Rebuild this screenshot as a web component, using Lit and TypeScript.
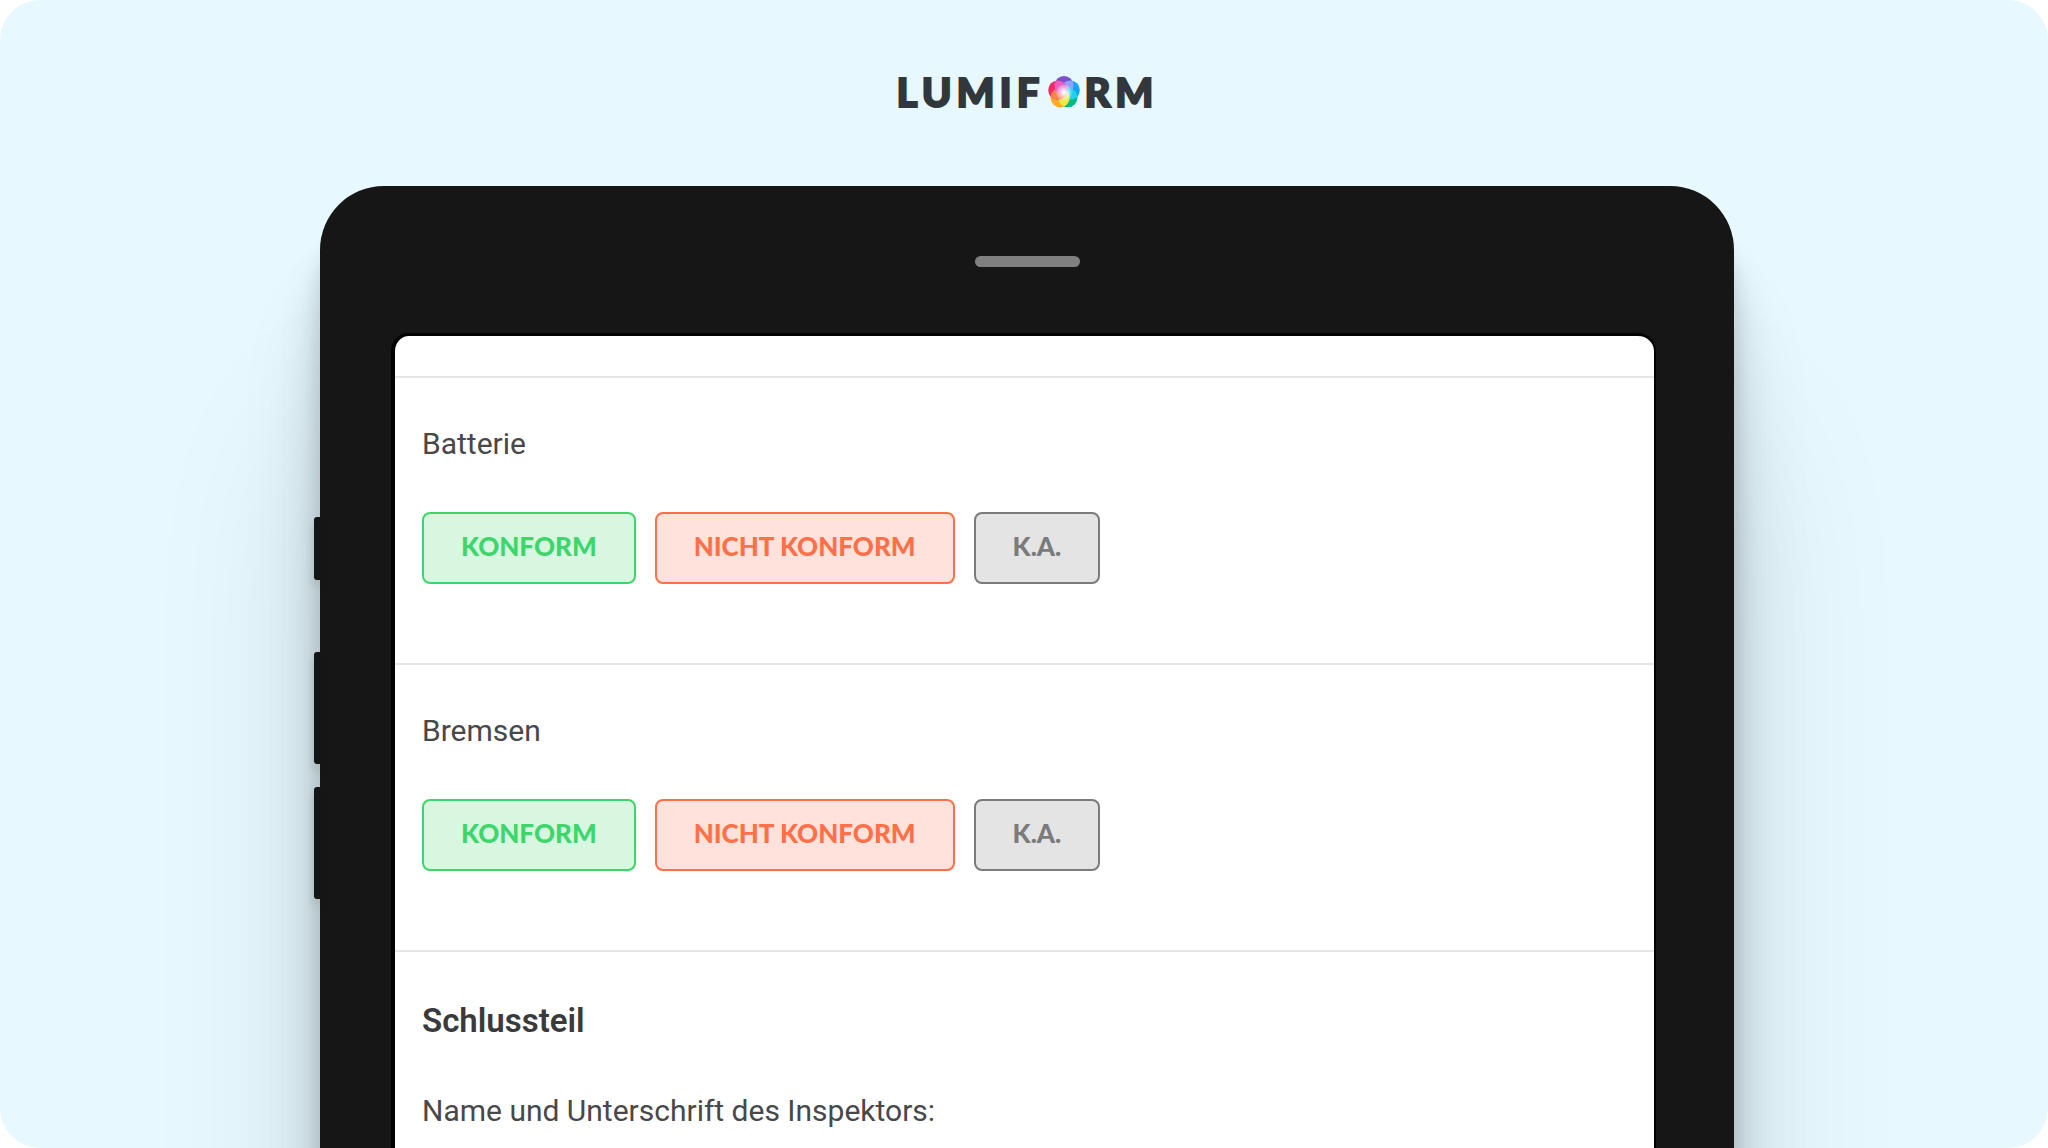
import { LitElement, html, css, svg } from "lit";
import { customElement, property } from "lit/decorators.js";

interface Answer {
  label: string;
  tone: "ok" | "fail" | "na";
}

const ANSWERS: Answer[] = [
  { label: "KONFORM", tone: "ok" },
  { label: "NICHT KONFORM", tone: "fail" },
  { label: "K.A.", tone: "na" },
];

const QUESTIONS = ["Batterie", "Bremsen"];

/* Petals of the orb, clockwise from the top; "mix" is the overlap with the next one */
const PETALS = [
  { id: "top", x: 16, y: 9.6, fill: "#7d4fc8", mix: "#8fa2ff" },
  { id: "right", x: 22.2, y: 14.1, fill: "#12a4ff", mix: "#1fd3f0" },
  { id: "bottom", x: 19.9, y: 21.6, fill: "#00b985", mix: "#e9ea4a" },
  { id: "gold", x: 12.1, y: 21.6, fill: "#ffab2a", mix: "#ff8350" },
  { id: "left", x: 9.8, y: 14.1, fill: "#f52a62", mix: "#e85fc4" },
];

@customElement("lumi-logo")
export class LumiLogo extends LitElement {
  static styles = css`
    :host {
      display: block;
    }
    .logo {
      display: flex;
      align-items: center;
      justify-content: center;
      gap: 4px;
      margin: 0;
      padding-left: 7px;
      color: #32373b;
      font: 900 40px/48px Lato, "Liberation Sans", sans-serif;
      letter-spacing: 5px;
      -webkit-text-stroke: 2px #32373b;
    }
    .orb {
      width: 32px;
      height: 32px;
    }
  `;

  render() {
    return html`
      <h1 class="logo">
        <span>LUMIF</span>
        <svg class="orb" viewBox="0 0 32 32" role="img" aria-label="O">
          <defs>
            ${PETALS.map(
              (p) => svg`<clipPath id=${p.id}><circle cx=${p.x} cy=${p.y} r="9.6"></circle></clipPath>`
            )}
            <radialGradient id="core">
              <stop offset="0.1" stop-color="#fff"></stop>
              <stop offset="0.5" stop-color="#fff" stop-opacity="0.6"></stop>
              <stop offset="1" stop-color="#fff" stop-opacity="0.15"></stop>
            </radialGradient>
          </defs>
          ${PETALS.map(
            (p) => svg`<circle cx=${p.x} cy=${p.y} r="9.6" fill=${p.fill}></circle>`
          )}
          ${PETALS.map((p, i) => {
            const next = PETALS[(i + 1) % PETALS.length];
            return svg`<circle cx=${next.x} cy=${next.y} r="9.6" fill=${p.mix} clip-path="url(#${p.id})"></circle>`;
          })}
          <circle cx="16" cy="16.4" r="8" fill="url(#core)"></circle>
        </svg>
        <span>RM</span>
      </h1>
    `;
  }
}

@customElement("check-item")
export class CheckItem extends LitElement {
  @property() question = "";

  static styles = css`
    :host {
      display: block;
      border-bottom: 2px solid #e6e6e6;
    }
    .item {
      display: flex;
      flex-direction: column;
      gap: 49px;
      margin: 0;
      padding: 47px 27px 79px;
    }
    .question {
      margin: 0;
      color: #48484a;
      font: 400 30px/38px Roboto, "Liberation Sans", sans-serif;
    }
    .answers {
      display: flex;
      flex-wrap: wrap;
      gap: 19px;
    }
    .answer {
      box-sizing: border-box;
      height: 72px;
      padding: 0 37px 4px;
      border: 2px solid;
      border-radius: 8px;
      font: 900 26px/32px Lato, "Liberation Sans", sans-serif;
      cursor: pointer;
    }
    .ok {
      color: #3dd66b;
      background: #d8f7e1;
    }
    .fail {
      color: #ff7048;
      background: #ffe2db;
    }
    .na {
      color: #7b7b7b;
      background: #e4e4e4;
    }
  `;

  render() {
    return html`
      <section class="item">
        <h2 class="question" id="question">${this.question}</h2>
        <div class="answers" role="group" aria-labelledby="question">
          ${ANSWERS.map(
            (a) => html`<button type="button" class="answer ${a.tone}">${a.label}</button>`
          )}
        </div>
      </section>
    `;
  }
}

@customElement("app-root")
export class AppRoot extends LitElement {
  static styles = css`
    :host {
      display: block;
      background: #fff;
    }
    .stage {
      box-sizing: border-box;
      display: flex;
      flex-direction: column;
      height: 100vh;
      overflow: hidden;
      border-radius: 40px;
      background: #e7f9ff;
    }
    .brand {
      padding: 68px 0 70px;
    }
    .tablet {
      flex: 1;
      display: flex;
      min-height: 0;
      margin: 0 314px;
    }
    .keys {
      z-index: 1;
      display: flex;
      flex-direction: column;
      gap: 23px;
      width: 6px;
      padding-top: 331px;
    }
    .key {
      height: 112px;
      border-radius: 3px 0 0 3px;
      background: #121616;
      box-shadow: 0 6px 8px rgba(0, 0, 0, 0.12);
    }
    .power {
      height: 63px;
      margin-bottom: 49px;
    }
    .body {
      flex: 1;
      display: flex;
      flex-direction: column;
      min-width: 0;
      padding-top: 70px;
      border-radius: 64px 64px 0 0;
      background: #161616;
      box-shadow:
        0 240px 180px rgba(0, 10, 20, 0.11),
        0 110px 84px rgba(0, 10, 20, 0.11),
        0 64px 44px rgba(0, 10, 20, 0.12),
        0 40px 20px rgba(0, 10, 20, 0.12);
    }
    .speaker {
      flex: none;
      align-self: center;
      width: 105px;
      height: 11px;
      margin-bottom: 66px;
      border-radius: 6px;
      background: #808080;
    }
    .screen {
      flex: 1;
      min-height: 0;
      margin: 0 78px 0 71px;
      overflow: hidden;
      border: solid #000;
      border-width: 3px 2px 0 4px;
      border-radius: 18px 18px 0 0;
      background: #fff;
    }
    .lead {
      height: 40px;
      border-bottom: 2px solid #e6e6e6;
    }
    .closing {
      padding: 50px 27px;
      color: #48484a;
      font: 400 30px/38px Roboto, "Liberation Sans", sans-serif;
    }
    .title {
      margin: 0 0 52px;
      color: #3a3a3c;
      font-size: 33px;
      font-weight: 600;
    }
    .text {
      margin: 0;
    }
  `;

  render() {
    return html`
      <main class="stage">
        <lumi-logo class="brand"></lumi-logo>
        <div class="tablet">
          <div class="keys">
            <div class="key power"></div>
            <div class="key"></div>
            <div class="key"></div>
          </div>
          <div class="body">
            <div class="speaker"></div>
            <div class="screen">
              <div class="lead"></div>
              ${QUESTIONS.map((q) => html`<check-item .question=${q}></check-item>`)}
              <section class="closing">
                <h2 class="title">Schlussteil</h2>
                <p class="text">Name und Unterschrift des Inspektors:</p>
              </section>
            </div>
          </div>
        </div>
      </main>
    `;
  }
}
